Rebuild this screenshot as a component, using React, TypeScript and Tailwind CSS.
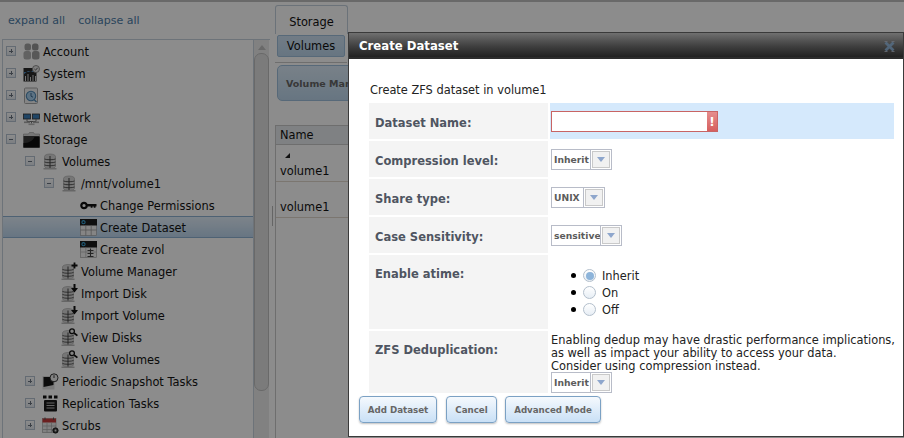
import React from "react";

const Db = ({ x = 0, y = 0 }: { x?: number; y?: number }) => (
  <g transform={`translate(${x} ${y})`}>
    <path d="M1.500 3c0-1.500 2.500-2.500 5.500-2.500s5.500 1 5.500 2.500v10c0 1-2.500 1.800-5.500 1.800s-5.500-.8-5.500-1.800z" fill="#d8d8d8" stroke="#a5a5a5" strokeWidth="0.600" />
    <path d="M0.500 14.500h13v1.500h-13z" fill="#bbb" />
    <path d="M1.500 5.500c2 1 9 1 11 0M1.500 8.500c2 1 9 1 11 0M1.500 11.500c2 1 9 1 11 0" stroke="#5a5a5a" strokeWidth="1" fill="none" />
    <path d="M7 2.500v12" stroke="#444" strokeWidth="1" fill="none" />
  </g>
);

const icons: Record<string, React.ReactNode> = {
  account: (
    <svg width="17" height="17" viewBox="0 0 17 17">
      <rect x="1.500" y="0.500" width="6.500" height="7" rx="2.500" fill="#a4a4a4" />
      <rect x="9" y="0.500" width="6.500" height="7" rx="2.500" fill="#979797" />
      <rect x="0.500" y="8" width="7.500" height="8.500" rx="2.500" fill="#b2b2b2" />
      <rect x="9" y="8" width="7.500" height="8.500" rx="2.500" fill="#a0a0a0" />
    </svg>
  ),
  system: (
    <svg width="17" height="17" viewBox="0 0 17 17">
      <rect x="0.500" y="3" width="13" height="13.500" fill="#2b2b2b" />
      <path d="M1 9l4-3 3 1 4-3v3H1z" fill="#4f8fc4" />
      <path d="M2.500 16v-5M5 16v-7M7.500 16v-4M10 16v-6M12.500 16v-5" stroke="#d0d0d0" strokeWidth="1" />
      <circle cx="13" cy="4" r="3.500" fill="#e8e8e8" stroke="#777" strokeWidth="0.800" />
      <path d="M11.400 4l1.200 1.200 2-2.400" stroke="#555" strokeWidth="0.900" fill="none" />
    </svg>
  ),
  tasks: (
    <svg width="17" height="17" viewBox="0 0 17 17">
      <rect x="1.500" y="1" width="13" height="15.500" rx="1" fill="#f2f2f2" stroke="#a8a8a8" />
      <circle cx="8" cy="9" r="4.700" fill="#a8d0ee" stroke="#4f87b3" strokeWidth="1.100" />
      <path d="M8 6v3.200l2 1" stroke="#2f5f86" strokeWidth="0.900" fill="none" />
      <path d="M11 12.500l2.500 2.500" stroke="#4f87b3" strokeWidth="1.200" />
    </svg>
  ),
  network: (
    <svg width="17" height="17" viewBox="0 0 17 17">
      <rect x="0.500" y="5" width="7" height="5" fill="#3b7fb8" stroke="#333" strokeWidth="0.800" />
      <rect x="9.500" y="5" width="7" height="5" fill="#3b7fb8" stroke="#333" strokeWidth="0.800" />
      <path d="M4 10v2.500h9V10M8.500 12.500v2" stroke="#777" strokeWidth="1" fill="none" />
      <rect x="1" y="12.500" width="6" height="1.600" fill="#aaa" />
      <rect x="10" y="12.500" width="6" height="1.600" fill="#aaa" />
      <rect x="5.500" y="14.500" width="6" height="1.600" fill="#bbb" />
    </svg>
  ),
  storage: (
    <svg width="17" height="17" viewBox="0 0 17 17">
      <path d="M0.500 3h5l1-1.500h4L11.500 3h5v13.500H0.500z" fill="#d8d8d8" stroke="#8a8a8a" strokeWidth="0.500" />
      <path d="M0.500 5h16v11.500H0.500z" fill="#3a3a3a" />
      <path d="M0.500 16.500V12c5 0 9-2 11-6h5v10.500z" fill="#0f0f0f" />
    </svg>
  ),
  db: (
    <svg width="16" height="17" viewBox="0 0 16 17">
      <Db x={1} y={0.500} />
    </svg>
  ),
  key: (
    <svg width="17" height="17" viewBox="0 0 17 17">
      <circle cx="4" cy="8.500" r="2.700" fill="none" stroke="#111" strokeWidth="2.200" />
      <path d="M6.500 7h10v2.500h-1v1.200h-1.800V9.500h-1.200v1.200h-1.800V9.500H6.500z" fill="#111" />
    </svg>
  ),
  table: (
    <svg width="17" height="17" viewBox="0 0 17 17">
      <rect x="0.500" y="0.500" width="16" height="16" fill="#f3f3f3" stroke="#999" strokeWidth="0.600" />
      <rect x="0" y="0" width="17" height="6.500" fill="#1c1c1c" />
      <circle cx="3.500" cy="3.200" r="1.600" fill="none" stroke="#3aa6d8" strokeWidth="1.100" />
      <path d="M0.500 11h16M5.800 6.500v10M11.200 6.500v10" stroke="#9a9a9a" strokeWidth="0.800" />
    </svg>
  ),
  zvol: (
    <svg width="17" height="17" viewBox="0 0 17 17">
      <rect x="0.500" y="0.500" width="16" height="16" fill="#f3f3f3" stroke="#999" strokeWidth="0.600" />
      <rect x="0" y="0" width="17" height="6.500" fill="#1c1c1c" />
      <circle cx="3.500" cy="3.200" r="1.600" fill="none" stroke="#3aa6d8" strokeWidth="1.100" />
      <path d="M0.500 11h16M5.800 6.500v10" stroke="#b5b5b5" strokeWidth="0.800" />
      <path d="M10.500 7.500v8.500M7.500 9.500h6M7.500 12.500h6M7.500 15.500h6" stroke="#444" strokeWidth="1.100" />
    </svg>
  ),
  dbPlus: (
    <svg width="18" height="18" viewBox="0 0 18 18">
      <Db x={0} y={2} />
      <path d="M13.500 0.500v6M10.500 3.500h6" stroke="#111" strokeWidth="1.800" />
    </svg>
  ),
  dbDown: (
    <svg width="18" height="18" viewBox="0 0 18 18">
      <Db x={0} y={2} />
      <path d="M12.500 0v4H10l3.500 4.500L17 4h-2.500V0z" fill="#111" />
    </svg>
  ),
  dbSearch: (
    <svg width="18" height="18" viewBox="0 0 18 18">
      <Db x={0} y={2} />
      <circle cx="11" cy="3.200" r="2.400" fill="#eee" stroke="#111" strokeWidth="1.300" />
      <path d="M13 5l3.400 2.600" stroke="#111" strokeWidth="1.800" />
    </svg>
  ),
  snapshot: (
    <svg width="17" height="17" viewBox="0 0 17 17">
      <rect x="0.500" y="3" width="12" height="13.500" fill="#ddd" />
      <path d="M1.500 4h10v8l-10 2z" fill="#151515" />
      <circle cx="12" cy="4.800" r="4" fill="#eee" stroke="#222" strokeWidth="0.900" />
      <path d="M12 2.200v2.800" stroke="#222" strokeWidth="0.900" />
    </svg>
  ),
  replication: (
    <svg width="17" height="17" viewBox="0 0 17 17">
      <path d="M1 0.500h3.500v3H1zM6.500 0.500H10v3H6.500zM12 0.500h3.500v3H12z" fill="#111" />
      <rect x="2" y="5" width="13" height="11.500" rx="1" fill="#1b1b1b" />
      <path d="M4.500 8h8M4.500 10.500h8M4.500 13h8" stroke="#b8b8b8" strokeWidth="1.100" />
    </svg>
  ),
  scrubs: (
    <svg width="17" height="17" viewBox="0 0 17 17">
      <rect x="0.500" y="1.500" width="13.500" height="14" fill="#ececec" stroke="#999" strokeWidth="0.600" />
      <rect x="0.500" y="1.500" width="13.500" height="4" fill="#c43a3a" />
      <path d="M3 0.500v2.500M11.500 0.500v2.500" stroke="#555" strokeWidth="1" />
      <path d="M1 9h13M1 12.500h13M5 5.500v10M9.500 5.500v10" stroke="#aaa" strokeWidth="0.700" />
      <circle cx="13.500" cy="13.500" r="2.600" fill="#444" stroke="#111" />
      <circle cx="13.500" cy="13.500" r="0.900" fill="#ddd" />
    </svg>
  ),
};

type Row = { label: string; icon: string; level: number; exp?: "+" | "-"; sel?: boolean };

const rows: Row[] = [
  { label: "Account", icon: "account", level: 0, exp: "+" },
  { label: "System", icon: "system", level: 0, exp: "+" },
  { label: "Tasks", icon: "tasks", level: 0, exp: "+" },
  { label: "Network", icon: "network", level: 0, exp: "+" },
  { label: "Storage", icon: "storage", level: 0, exp: "-" },
  { label: "Volumes", icon: "db", level: 1, exp: "-" },
  { label: "/mnt/volume1", icon: "db", level: 2, exp: "-" },
  { label: "Change Permissions", icon: "key", level: 3 },
  { label: "Create Dataset", icon: "table", level: 3, sel: true },
  { label: "Create zvol", icon: "zvol", level: 3 },
  { label: "Volume Manager", icon: "dbPlus", level: 2 },
  { label: "Import Disk", icon: "dbDown", level: 2 },
  { label: "Import Volume", icon: "dbDown", level: 2 },
  { label: "View Disks", icon: "dbSearch", level: 2 },
  { label: "View Volumes", icon: "dbSearch", level: 2 },
  { label: "Periodic Snapshot Tasks", icon: "snapshot", level: 1, exp: "+" },
  { label: "Replication Tasks", icon: "replication", level: 1, exp: "+" },
  { label: "Scrubs", icon: "scrubs", level: 1, exp: "+" },
];

const indent: Record<number, string> = { 0: "pl-[3px]", 1: "pl-[22px]", 2: "pl-[41px]", 3: "pl-[60px]" };

function TreeRow({ r }: { r: Row }) {
  return (
    <div
      className={`flex h-[22px] shrink-0 items-center ${indent[r.level]} ${
        r.sel ? "border-y border-[#8fb3d3] bg-gradient-to-b from-[#e4f0fb] to-[#bcd6ee]" : ""
      }`}
    >
      <span className="flex w-[10px] shrink-0 justify-center">
        {r.exp && (
          <span className="relative block h-[10px] w-[10px] border border-[#b7c4d2] bg-gradient-to-b from-white to-[#e3e8ee]">
            <span className="absolute left-[2px] top-[3.500px] h-px w-[4px] bg-[#6a7480]" />
            {r.exp === "+" && <span className="absolute left-[3.500px] top-[2px] h-[4px] w-px bg-[#6a7480]" />}
          </span>
        )}
      </span>
      <span className="ml-[7px] flex h-[18px] w-[18px] shrink-0 items-center justify-start">{icons[r.icon]}</span>
      <span className="ml-[2px] whitespace-nowrap pt-[3px] text-[11.400px] leading-none text-[#131313]">{r.label}</span>
    </div>
  );
}

function Select({ text, textW }: { text: string; textW: string }) {
  return (
    <div className="flex h-[21px] border border-[#b8bcc8] bg-white">
      <span className={`flex items-center pl-[2px] text-[9.200px] font-bold text-[#5c5c5c] ${textW}`}>{text}</span>
      <span className="flex w-[21px] items-center justify-center border-l border-[#b8bcc8] p-px">
        <span className="flex h-full w-full items-center justify-center border border-[#c9c9c9] bg-[#f1f1f1]">
          <span className="h-0 w-0 border-x-[4px] border-t-[5px] border-x-transparent border-t-[#8ea6cc]" />
        </span>
      </span>
    </div>
  );
}

function Radio({ label, on }: { label: string; on?: boolean }) {
  return (
    <li className="flex h-[17px] items-center">
      <span className="h-[5px] w-[5px] rounded-full bg-black" />
      <span className="ml-[7px] flex h-[13px] w-[13px] items-center justify-center rounded-full border border-[#b3bfcc] bg-gradient-to-b from-white to-[#e7eef5]">
        {on && <span className="h-[8px] w-[8px] rounded-full bg-[#8db4da]" />}
      </span>
      <span className="ml-[6px] text-[11.400px] leading-[14px] text-[#222]">{label}</span>
    </li>
  );
}

function FormRow({ label, h, top, children, hl }: { label: string; h: string; top?: boolean; children: React.ReactNode; hl?: boolean }) {
  return (
    <div className={`flex gap-[2px] ${h}`}>
      <div className={`flex w-[179px] shrink-0 bg-[#f4f4f4] pl-[6px] text-[11.500px] font-bold text-[#4f5561] ${top ? "items-start pt-[11px]" : "items-center pt-[5px]"}`}>
        {label}
      </div>
      <div className={`flex-1 pl-px ${hl ? "bg-[#d5e9fc]" : ""}`}>{children}</div>
    </div>
  );
}

function Btn({ children, w }: { children: React.ReactNode; w: string }) {
  return (
    <button className={`flex h-[27px] items-center justify-center rounded-[4px] border border-[#7ba1c4] bg-gradient-to-b from-[#f5f9fd] to-[#c9e0f6] pt-[2px] text-[8.700px] font-bold text-[#666] shadow-[0_1px_2px_rgba(0,0,0,0.25)] ${w}`}>
      {children}
    </button>
  );
}

export default function App() {
  return (
    <div
      className="relative h-[438px] w-[904px] overflow-hidden bg-white"
      style={{ fontFamily: '"DejaVu Sans", sans-serif' }}
    >
      <div className="flex h-full border-t-2 border-[#c0c0c0]">
        {/* left pane */}
        <div className="flex w-[270px] shrink-0 flex-col">
          <div className="flex h-[37px] items-center gap-[13px] pl-[8px] pt-[1px] text-[11px] text-[#4d7da8]">
            <span>expand all</span>
            <span>collapse all</span>
          </div>
          <div className="ml-[2px] flex min-h-0 flex-1 border-l border-t border-[#c6d2dc]">
            <div className="flex w-[251px] flex-col overflow-hidden border-r border-[#c6d2dc]">
              {rows.map((r) => (
                <TreeRow key={r.label} r={r} />
              ))}
            </div>
            <div className="flex w-[15px] flex-col items-center bg-[#ececec]">
              <span className="mt-[5px] h-0 w-0 border-x-[4px] border-b-[5px] border-x-transparent border-b-[#c0c0c0]" />
              <span className="mt-[3px] h-[338px] w-full rounded-[7px] border border-[#c0c0c0] bg-[#e0e0e0]" />
            </div>
          </div>
        </div>
        {/* splitter */}
        <div className="flex w-[5px] shrink-0 items-center justify-center">
          <span className="mt-[-8px] h-[20px] w-px bg-[#b8b8b8]" />
        </div>
        {/* right pane */}
        <div className="flex min-w-0 flex-1 flex-col">
          <div className="mt-[3px] h-[29px] w-[73px] rounded-t-[3px] border border-b-0 border-[#c3d0dc] pt-[9px] text-center text-[11.400px] leading-[14px] text-[#111]">
            Storage
          </div>
          <div className="h-[29px] w-[72px] border-b border-[#c8c8c8] pl-[2px] pt-[1px]">
            <div className="flex h-[22px] w-[68px] items-center justify-center rounded-[2px] border border-[#9fc0dc] bg-gradient-to-b from-[#cfe2f3] to-[#bcd6ec] pt-[2px] text-[11.400px] text-[#111]">
              Volumes
            </div>
          </div>
          <div className="mb-[24px] ml-[2px] mt-[2px] flex h-[36px] w-[120px] items-center rounded-[5px] border border-[#9fc0dc] bg-gradient-to-b from-[#dcebf8] to-[#bcd6ec] pl-[8px] pt-[2px] text-[9.500px] font-bold text-[#666]">
            Volume Manager
          </div>
          <div className="flex min-h-0 flex-1 flex-col border-l border-[#c8c8c8] text-[11.400px] text-[#111]">
            <div className="flex h-[20px] items-center border-y border-[#c8c8c8] bg-[#e8ecef] pl-[4px] pt-[2px]">Name</div>
            <div className="flex h-[37px] flex-col justify-end border-b border-[#e0d8cc] pb-[2px] pl-[4px] leading-[15px]">
              <span className="ml-[5px] block h-0 w-0 border-b-[5px] border-l-[5px] border-b-[#222] border-l-transparent" />
              <span className="mt-[6px]">volume1</span>
            </div>
            <div className="flex h-[36px] items-end border-b border-[#e0d8cc] pb-[1px] pl-[4px]">volume1</div>
          </div>
        </div>
      </div>

      {/* dim layer */}
      <div className="absolute inset-0 bg-black/45" />

      {/* dialog */}
      <div className="absolute left-[348px] top-[32px] flex h-[405px] w-[556px] flex-col border border-[#3a3a3a] bg-white">
        <div className="flex h-[26px] shrink-0 items-center justify-between bg-gradient-to-b from-[#707070] via-[#404040] to-[#1c1c1c] pl-[10px] pr-[7px] shadow-[inset_0_-2px_0_#2c2c2c]">
          <span className="pt-[2px] text-[11.700px] font-bold text-white">Create Dataset</span>
          <svg width="13" height="13" viewBox="0 0 13 13" className="opacity-80">
            <path d="M2.500 2.500l8 8M10.500 2.500l-8 8" stroke="#566f88" strokeWidth="2.800" />
            <path d="M1.500 1.500h3M8.500 1.500h3M1.500 11.500h3M8.500 11.500h3" stroke="#6c7078" strokeWidth="1" />
          </svg>
        </div>
        <div className="flex min-h-0 flex-1 flex-col pl-[20px] pr-[9px]">
          <p className="mb-[6px] mt-[24px] pl-px text-[11.400px] leading-[14px] text-[#222]">Create ZFS dataset in volume1</p>
          <div className="flex flex-col gap-[2px]">
            <FormRow label="Dataset Name:" h="h-[36px]" hl>
              <div className="mt-[8px] flex h-[21px] w-[167px] border border-[#c86464] bg-white">
                <span className="flex-1" />
                <span className="flex w-[10px] items-center justify-center bg-gradient-to-b from-[#e58d8d] to-[#d65f5f] text-[12px] font-bold leading-none text-white">!</span>
              </div>
            </FormRow>
            <FormRow label="Compression level:" h="h-[36px]">
              <div className="mt-[8px] w-fit"><Select text="Inherit" textW="w-[38px]" /></div>
            </FormRow>
            <FormRow label="Share type:" h="h-[36px]">
              <div className="mt-[8px] w-fit"><Select text="UNIX" textW="w-[31px]" /></div>
            </FormRow>
            <FormRow label="Case Sensitivity:" h="h-[36px]">
              <div className="mt-[8px] w-fit"><Select text="sensitive" textW="w-[48px]" /></div>
            </FormRow>
            <FormRow label="Enable atime:" h="h-[74px]" top>
              <ul className="mt-[12px] pl-[20px]">
                <Radio label="Inherit" on />
                <Radio label="On" />
                <Radio label="Off" />
              </ul>
            </FormRow>
            <FormRow label="ZFS Deduplication:" h="h-[62px]" top>
              <div className="pt-[3px] text-[11.400px] leading-[13px] text-[#222]">
                <p className="whitespace-nowrap">Enabling dedup may have drastic performance implications,</p>
                <p className="whitespace-nowrap">as well as impact your ability to access your data.</p>
                <p className="whitespace-nowrap">Consider using compression instead.</p>
                <div className="-mt-px w-fit"><Select text="Inherit" textW="w-[38px]" /></div>
              </div>
            </FormRow>
          </div>
          <div className="-ml-[10px] mt-[3px] flex gap-[9px]">
            <Btn w="w-[78px]">Add Dataset</Btn>
            <Btn w="w-[51px]">Cancel</Btn>
            <Btn w="-ml-px w-[96px]">Advanced Mode</Btn>
          </div>
        </div>
      </div>
    </div>
  );
}
